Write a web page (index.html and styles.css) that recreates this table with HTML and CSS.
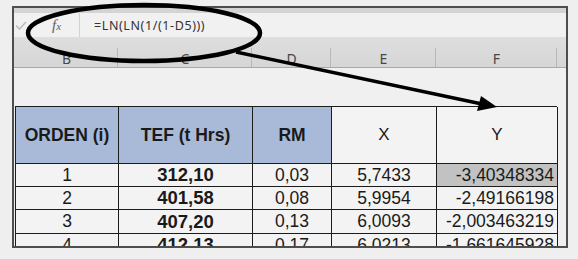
FILE: index.html
```html
<!DOCTYPE html>
<html>
<head>
<meta charset="utf-8">
<link rel="stylesheet" href="styles.css">
</head>
<body>
<div class="screen">
  <div class="frame">
    <div class="strip"></div>
    <div class="fbar">
      <div class="tools">
        <svg class="check" width="12" height="9" viewBox="0 0 12 9"><polyline points="1,4.5 4.5,8 11,1" fill="none" stroke="#bdbdbd" stroke-width="1.6"/></svg>
        <span class="fx">f<span class="fxx">x</span></span>
      </div>
      <div class="input">=LN(LN(1/(1-D5)))</div>
    </div>
    <div class="colhead">
      <div class="ch">B</div>
      <div class="ch">C</div>
      <div class="ch">D</div>
      <div class="ch">E</div>
      <div class="ch">F</div>
    </div>
    <div class="gap"></div>
    <div class="grid">
      <div class="c hd blue">ORDEN (i)</div>
      <div class="c hd blue">TEF (t Hrs)</div>
      <div class="c hd blue">RM</div>
      <div class="c hd plain">X</div>
      <div class="c hd plain">Y</div>

      <div class="c">1</div>
      <div class="c b">312,10</div>
      <div class="c">0,03</div>
      <div class="c">5,7433</div>
      <div class="c r sel">-3,40348334</div>

      <div class="c">2</div>
      <div class="c b">401,58</div>
      <div class="c">0,08</div>
      <div class="c">5,9954</div>
      <div class="c r">-2,49166198</div>

      <div class="c">3</div>
      <div class="c b">407,20</div>
      <div class="c">0,13</div>
      <div class="c">6,0093</div>
      <div class="c r">-2,003463219</div>

      <div class="c">4</div>
      <div class="c b">412,13</div>
      <div class="c">0,17</div>
      <div class="c">6,0213</div>
      <div class="c r">-1,661645928</div>
    </div>
  </div>
  <svg class="annot" width="578" height="259" viewBox="0 0 578 259">
    <ellipse cx="144" cy="33" rx="116" ry="28" fill="none" stroke="#000" stroke-width="4.5"/>
    <line x1="236" y1="52" x2="482" y2="104" stroke="#000" stroke-width="3.5"/>
    <polygon points="497,107 481,96 477,111" fill="#000"/>
  </svg>
</div>
</body>
</html>
```

FILE: styles.css
```css
* { box-sizing: border-box; }
html, body { margin: 0; padding: 0; }
body { background: #efefef; }

.screen {
  position: relative;
  width: 578px;
  height: 259px;
  padding: 6px 0 0 12px;
  background: #efefef;
  overflow: hidden;
}

.frame {
  width: 556px;
  height: 242px;
  border: 2px solid #4e4e4e;
  background: #f0f0f0;
  overflow: hidden;
  display: flex;
  flex-direction: column;
}

.strip {
  height: 5px;
  flex: none;
  background: #d4d4d4;
}

.fbar {
  height: 24px;
  flex: none;
  display: flex;
  background: #f1f1f1;
}
.tools {
  width: 66px;
  display: flex;
  align-items: center;
  padding-left: 1px;
  border-right: 1px solid #d2d2d2;
}
.check { flex: none; margin-top: 1px; }
.fx {
  margin-left: 25px;
  font-family: "Liberation Serif", serif;
  font-style: italic;
  font-size: 15px;
  color: #5e5e5e;
}
.fxx { font-size: 11px; }
.input {
  flex: 1;
  display: flex;
  align-items: center;
  padding-left: 14px;
  font-family: "Noto Sans", sans-serif;
  font-size: 12.5px;
  letter-spacing: 0.6px;
  color: #333;
}

.colhead {
  height: 31px;
  flex: none;
  display: flex;
  padding-left: 1px;
  background: linear-gradient(#dedede, #d6d6d6);
  border-bottom: 1px solid #a9a9a9;
}
.ch {
  padding-top: 12px;
  text-align: center;
  font-family: "Noto Sans", sans-serif;
  font-size: 14px;
  line-height: 19px;
  color: #474747;
  background: linear-gradient(#b8b8b8, #b8b8b8) right bottom / 1px 19px no-repeat;
}
.ch:nth-child(1) { width: 103px; }
.ch:nth-child(2) { width: 134px; }
.ch:nth-child(3) { width: 79px; }
.ch:nth-child(4) { width: 105px; }
.ch:nth-child(5) { width: 121px; }

.gap { height: 38px; flex: none; }

.grid {
  flex: none;
  margin-left: 1px;
  width: 542px;
  display: grid;
  grid-template-columns: 103px 134px 79px 105px 121px;
  grid-template-rows: 57px 23px 23px 24px 23px;
  border-top: 1px solid #1c1c1c;
  border-left: 1px solid #1c1c1c;
}
.c {
  border-right: 1px solid #1c1c1c;
  border-bottom: 1px solid #1c1c1c;
  display: flex;
  align-items: center;
  justify-content: center;
  font-family: "Liberation Sans", Arial, sans-serif;
  font-size: 17.5px;
  color: #1a1a1a;
  background: #f3f3f3;
  white-space: nowrap;
}
.hd { font-size: 17.5px; }
.blue { background: #a8bad7; font-weight: bold; }
.plain { font-weight: normal; font-size: 17px; }
.b { font-weight: bold; font-size: 18.5px; }
.r { justify-content: flex-end; padding-right: 3px; }
.sel { background: #c2c2c2; }

.annot {
  position: absolute;
  left: 0;
  top: 0;
}
```
